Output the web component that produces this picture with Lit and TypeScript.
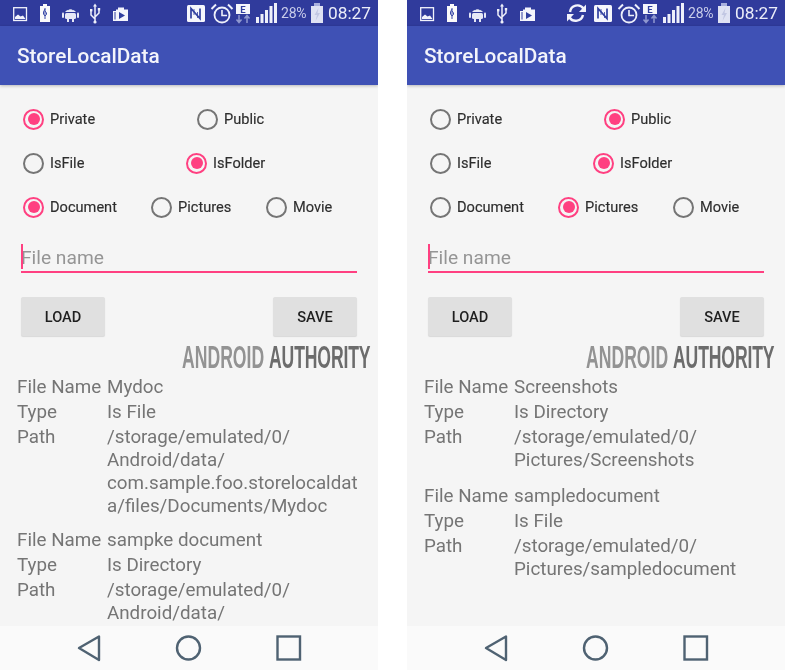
import { LitElement, html, css, svg } from "lit";
import { customElement, property } from "lit/decorators.js";

type Radio = { label: string; on: boolean };
type Rec = { name: string; type: string; path: string[] };

const leftIcons = svg`
  <rect x="13.7" y="7.7" width="12.8" height="12.8" fill="none" stroke="#f2f3fb" stroke-width="1.3"/>
  <path d="M15 19 L15 17 L18 14.5 L20.5 16.5 L23 15.5 L25.5 19 Z" fill="#f2f3fb"/>
  <path d="M43 4 H47 V6 H50 V22 H40 V6 H43 Z" fill="#fafafa"/>
  <path d="M45 8 V19 M45 9 L43.5 12 V14 L45 16 M45 11 L46.5 13 V14.5 L45 16" fill="none" stroke="#3a4aa8" stroke-width="1"/>
  <path d="M65 12 A6.5 6 0 0 1 76 12 Z" fill="#e6e8f6"/>
  <rect x="65" y="13" width="11" height="6" rx="1.5" fill="#e6e8f6"/>
  <rect x="62" y="12.5" width="2" height="5.5" rx="1" fill="#e6e8f6"/>
  <rect x="77" y="12.5" width="2" height="5.5" rx="1" fill="#e6e8f6"/>
  <rect x="67" y="19" width="2" height="3" fill="#e6e8f6"/>
  <rect x="72" y="19" width="2" height="3" fill="#e6e8f6"/>
  <circle cx="68" cy="9.5" r=".8" fill="#303f9f"/><circle cx="73" cy="9.5" r=".8" fill="#303f9f"/>
  <path d="M95 5 V22 M95 19 L91 15 V11 M95 17 L99 13 V10" fill="none" stroke="#eef0fa" stroke-width="1.5"/>
  <path d="M95 3.5 L97 6.5 H93 Z" fill="#eef0fa"/>
  <rect x="90" y="9" width="2.4" height="2.4" fill="#eef0fa"/><rect x="97.8" y="8" width="2.4" height="2.4" fill="#eef0fa"/>
  <circle cx="95" cy="22" r="1.6" fill="#eef0fa"/>
  <path d="M113 11 H116 V9.5 H118 V7.5 H124 V9.5 H128 V21 H113 Z" fill="#f4f5fc"/>
  <path d="M119 12 L125 15.5 L119 19 Z" fill="#303f9f"/>
  <path d="M115 12 V19.5" stroke="#303f9f" stroke-width="1"/>
`;

const rightIcons = svg`
  <rect x="2" y="5" width="18" height="17" rx="1.5" fill="#f5f6fc"/>
  <path d="M6 18.5 V8.5 L15 18.5 V8.5" fill="none" stroke="#303f9f" stroke-width="1.7"/>
  <path d="M9 9 V15 M12.5 12 V18" stroke="#303f9f" stroke-width=".8"/>
  <circle cx="37" cy="15" r="7.5" fill="none" stroke="#eef0fa" stroke-width="1.8"/>
  <path d="M37 10 V15.5 H42" fill="none" stroke="#eef0fa" stroke-width="1.6"/>
  <path d="M26.5 9 L31 4.5 M47.5 9 L43 4.5" stroke="#eef0fa" stroke-width="2"/>
  <rect x="51" y="4" width="14" height="10" fill="#f5f6fc"/>
  <text x="58" y="12.5" text-anchor="middle" class="e">E</text>
  <path d="M54 15 V22 M51.5 19.5 L54 22.5 L56.5 19.5 M62 23 V16 M59.5 18.5 L62 15.5 L64.5 18.5" fill="none" stroke="#8f98cf" stroke-width="1.5"/>
  <rect x="71" y="17" width="3" height="6" fill="#eef0fa"/>
  <rect x="75.5" y="14" width="3" height="9" fill="#eef0fa"/>
  <rect x="80" y="10" width="3" height="13" fill="#eef0fa"/>
  <rect x="84.5" y="6" width="3" height="17" fill="#eef0fa"/>
  <rect x="89" y="3" width="3" height="20" fill="#eef0fa"/>
`;

const syncIcon = svg`
  <path d="M17.5 8.5 A7.5 7.5 0 0 0 4 12" fill="none" stroke="#f2f3fb" stroke-width="2.4"/>
  <path d="M3.5 17.5 A7.5 7.5 0 0 0 17 15" fill="none" stroke="#f2f3fb" stroke-width="2.4"/>
  <path d="M20 4.5 V12 H13 Z" fill="#f2f3fb"/>
  <path d="M1 21.5 V14 H8 Z" fill="#f2f3fb"/>
`;

const battery = svg`
  <rect x="3" y="3" width="6" height="3" fill="#a9b0dd"/>
  <rect x="0" y="6" width="12" height="17" fill="#dfe2f3"/>
  <path d="M7.5 8 L3.5 15 H6 L4.5 21 L9 13 H6.5 Z" fill="#c2c7e3"/>
`;

@customElement("phone-screen")
class PhoneScreen extends LitElement {
  @property({ type: Array }) rows: Radio[][] = [];
  @property({ type: Array }) records: Rec[] = [];
  @property({ type: Boolean }) sync = false;
  @property({ type: Boolean }) shifted = false;

  static styles = css`
    :host { display: block; width: 378px; height: 670px; }
    .phone { position: relative; width: 378px; height: 670px; display: flex; flex-direction: column; overflow: hidden;
      background: #f5f5f5; font-family: Roboto, "Liberation Sans", sans-serif; filter: blur(0.45px); }
    .status { height: 26px; flex: none; background: #303b9c; display: flex; align-items: stretch; }
    .status svg { display: block; height: 26px; flex: none; }
    .status svg text.e { font: 700 9.5px Roboto, sans-serif; fill: #303f9f; }
    .s-left { width: 135px; }
    .s-right { margin-left: auto; display: flex; align-items: center; padding-right: 8px; }
    .s-sync { width: 24px; margin-right: 2px; }
    .s-main { width: 94px; }
    .pct { width: 30px; font-size: 14px; color: #c9cdea; margin-left: 2px; letter-spacing: -0.2px; }
    .s-batt { width: 17px; }
    .time { font-size: 17.3px; color: #eceef9; width: 42px; white-space: nowrap; }
    .bar { height: 59px; flex: none; background: #3f51b5; display: flex; align-items: center; padding-left: 17px;
      color: #f3f4fb; font-size: 20.8px; font-weight: 500; box-shadow: 0 1px 3px rgba(0,0,0,.25); position: relative; }
    .content { flex: 1; min-height: 0; overflow: hidden; padding-top: 12px; }
    .row { display: flex; height: 44px; padding-left: 23px; align-items: center; }
    .radio { display: flex; align-items: center; color: #2e2e2e; font-size: 14.6px; white-space: nowrap; -webkit-text-stroke: 0.15px #2e2e2e; }
    .circle { width: 17px; height: 17px; border: 2px solid #757575; border-radius: 50%; margin-right: 6px; flex: none; position: relative; }
    .radio.on .circle { border-color: #ff4081; }
    .radio.on .circle::after { content: ""; position: absolute; inset: 2.5px; border-radius: 50%; background: #ff4081; }
    .field { margin-left: 21px; width: 336px; height: 44px; border-bottom: 2px solid #ff4081; box-sizing: border-box;
      display: flex; align-items: flex-end; padding-bottom: 1px; color: #959595; font-size: 19.2px; position: relative; line-height: 24px; }
    .caret { position: absolute; left: 0; top: 15px; width: 1.5px; height: 25px; background: #ff4081; }
    .buttons { display: flex; justify-content: space-between; margin: 24px 21px 0; }
    .btn { width: 84px; height: 39px; background: #e0e0e0; border-radius: 2px; display: flex; align-items: center;
      justify-content: center; color: #1f1f1f; font-size: 14.6px; font-weight: 500; box-shadow: 0 1px 1px rgba(0,0,0,.12); }
    .info { margin-top: 40px; padding-left: 17px; color: #757575; font-size: 18.8px; line-height: 23px; }
    .rec { display: grid; grid-template-columns: 90px 1fr; row-gap: 2px; margin-bottom: 11px; white-space: nowrap; }
    .rec.wide { margin-bottom: 13px; }
    .nav { height: 44px; flex: none; background: #fafafa; }
    .nav svg { display: block; }
    .mark { position: absolute; top: 339px; left: 182px; white-space: nowrap; font: 700 32px "Liberation Sans", sans-serif;
      color: #939393; transform-origin: left center; transform: scaleX(.55); word-spacing: 0; }
    .mark.shift { left: 179px; }
    .mark b { color: #6c6c6c; letter-spacing: -.25px; }
  `;

  render() {
    return html`<div class="phone">
      <div class="status">
        <svg class="s-left" viewBox="0 0 135 26">${leftIcons}</svg>
        <div class="s-right">
          ${this.sync ? html`<svg class="s-sync" viewBox="0 0 24 26">${syncIcon}</svg>` : ""}
          <svg class="s-main" viewBox="0 0 94 26">${rightIcons}</svg>
          <span class="pct">28%</span>
          <svg class="s-batt" viewBox="0 0 17 26">${battery}</svg>
          <span class="time">08:27</span>
        </div>
      </div>
      <div class="bar">StoreLocalData</div>
      <div class="content">
        ${this.rows.map((r, i) => html`<div class="row">
          ${r.map((x, j) => html`<div class="radio ${x.on ? "on" : ""}" style="width:${[[174, 120], [163, 120], [128, 115, 80]][i][j]}px">
            <span class="circle"></span>${x.label}</div>`)}
        </div>`)}
        <div class="field"><span class="caret"></span>File name</div>
        <div class="buttons"><div class="btn">LOAD</div><div class="btn">SAVE</div></div>
        <div class="info">
          ${this.records.map((r) => html`<div class="rec ${this.shifted ? "wide" : ""}">
            <span>File Name</span><span>${r.name}</span>
            <span>Type</span><span>${r.type}</span>
            <span>Path</span><span>${r.path.map((p) => html`${p}<br />`)}</span>
          </div>`)}
        </div>
      </div>
      <div class="nav">
        <svg width="378" height="44" viewBox="0 626 378 44">
          <path d="M79 648 L99 636.5 V660 Z" fill="none" stroke="#4f6272" stroke-width="2.4" stroke-linejoin="round"/>
          <circle cx="188.5" cy="648" r="11.5" fill="none" stroke="#4f6272" stroke-width="2.4"/>
          <rect x="277.5" y="636.5" width="22.5" height="23" fill="none" stroke="#4f6272" stroke-width="2.4"/>
        </svg>
      </div>
      <div class="mark ${this.shifted ? "shift" : ""}">ANDROID <b>AUTHORITY</b></div>
    </div>`;
  }
}

const mk = (labels: string[], on: number): Radio[] => labels.map((label, i) => ({ label, on: i === on }));

@customElement("app-root")
class AppRoot extends LitElement {
  static styles = css`
    :host { display: block; width: 787px; height: 670px; background: #fff; overflow: hidden; }
    .wrap { display: flex; gap: 29px; }
  `;
  render() {
    const a = [mk(["Private", "Public"], 0), mk(["IsFile", "IsFolder"], 1), mk(["Document", "Pictures", "Movie"], 0)];
    const b = [mk(["Private", "Public"], 1), mk(["IsFile", "IsFolder"], 1), mk(["Document", "Pictures", "Movie"], 1)];
    const ra: Rec[] = [
      { name: "Mydoc", type: "Is File", path: ["/storage/emulated/0/", "Android/data/", "com.sample.foo.storelocaldat", "a/files/Documents/Mydoc"] },
      { name: "sampke document", type: "Is Directory", path: ["/storage/emulated/0/", "Android/data/"] },
    ];
    const rb: Rec[] = [
      { name: "Screenshots", type: "Is Directory", path: ["/storage/emulated/0/", "Pictures/Screenshots"] },
      { name: "sampledocument", type: "Is File", path: ["/storage/emulated/0/", "Pictures/sampledocument"] },
    ];
    return html`<div class="wrap">
      <phone-screen .rows=${a} .records=${ra}></phone-screen>
      <phone-screen .rows=${b} .records=${rb} sync shifted></phone-screen>
    </div>`;
  }
}
